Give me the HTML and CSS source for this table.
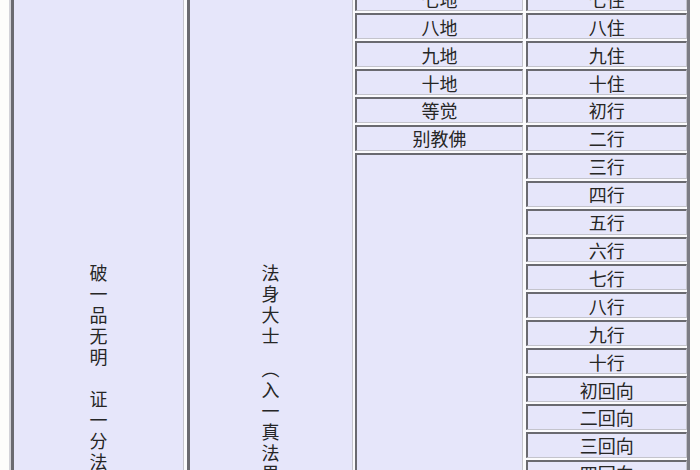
FILE: index.html
```html
<!DOCTYPE html>
<html lang="zh-CN">
<head>
<meta charset="utf-8">
<title>别教位次</title>
<link rel="stylesheet" href="styles.css">
</head>
<body>
<div class="table">
  <div class="col col-1">
    <div class="cell tall"><span class="vert">破一品无明　证一分法身</span></div>
  </div>
  <div class="col col-2">
    <div class="cell tall"><span class="vert">法身大士　（入一真法界）</span></div>
  </div>
  <div class="col col-3">
    <div class="cell">七地</div>
    <div class="cell">八地</div>
    <div class="cell">九地</div>
    <div class="cell">十地</div>
    <div class="cell">等觉</div>
    <div class="cell">别教佛</div>
    <div class="cell fill"></div>
  </div>
  <div class="col col-4">
    <div class="cell">七住</div>
    <div class="cell">八住</div>
    <div class="cell">九住</div>
    <div class="cell">十住</div>
    <div class="cell">初行</div>
    <div class="cell">二行</div>
    <div class="cell">三行</div>
    <div class="cell">四行</div>
    <div class="cell">五行</div>
    <div class="cell">六行</div>
    <div class="cell">七行</div>
    <div class="cell">八行</div>
    <div class="cell">九行</div>
    <div class="cell">十行</div>
    <div class="cell">初回向</div>
    <div class="cell">二回向</div>
    <div class="cell">三回向</div>
    <div class="cell">四回向</div>
    <div class="cell">五回向</div>
    <div class="cell">六回向</div>
  </div>
</div>
</body>
</html>
```

FILE: styles.css
```css
html, body {
  margin: 0;
  padding: 0;
  background: #fdfdfb;
}
body {
  width: 700px;
  height: 470px;
  overflow: hidden;
  font-family: "Noto Sans CJK SC", "Noto Sans", sans-serif;
  font-size: 18px;
  color: #262626;
}
.table {
  display: flex;
  gap: 2.5px;
  margin-top: -14.6px;
  margin-left: 9px;
  width: 676px;
  height: 600px;
  border-left: 2px solid #d2d2d8;
  border-right: 3px solid #7c7c84;
  background: #fbfbfd;
}
.col {
  display: flex;
  flex-direction: column;
  gap: 2px;
}
.col-1 { width: 173px; }
.col-2 { width: 166px; }
.col-3 { width: 168px; }
.col-4 { width: 161.5px; }
.cell {
  box-sizing: border-box;
  height: 25.92px;
  flex: none;
  background: #e6e6fa;
  border-top: 2px solid #6a6a70;
  border-left: 2px solid #6a6a70;
  border-bottom: 1px solid #c4c4cc;
  border-right: 1px solid #c4c4cc;
  display: flex;
  align-items: center;
  justify-content: center;
  line-height: 1;
  white-space: nowrap;
}
.cell.tall {
  flex: 1;
  height: auto;
  border-left-width: 3px;
  align-items: flex-start;
  padding-top: 277px;
}
.cell.fill {
  flex: 1;
  height: auto;
}
.vert {
  writing-mode: vertical-rl;
  letter-spacing: 3px;
  line-height: 1;
}
```
